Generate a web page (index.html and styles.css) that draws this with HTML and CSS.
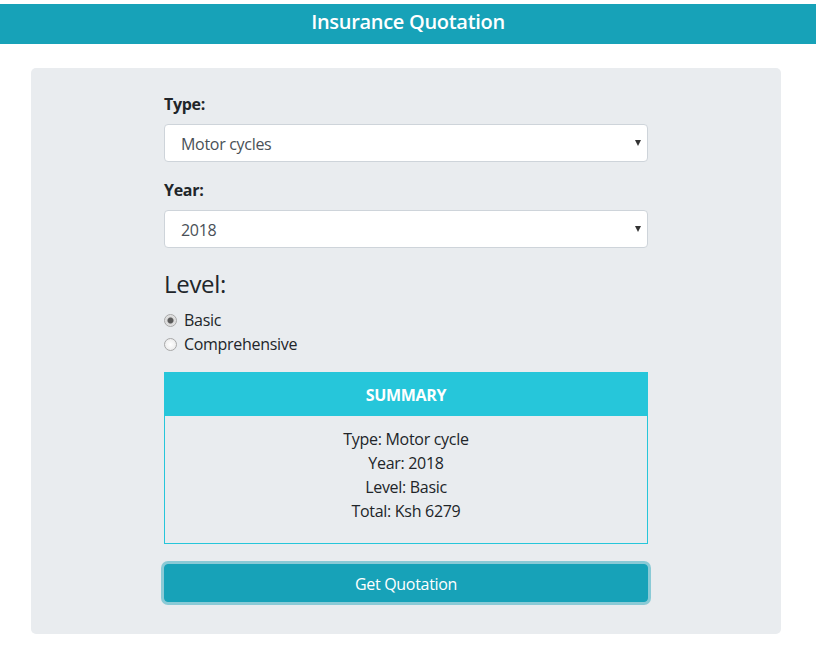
FILE: index.html
```html
<!DOCTYPE html>
<html lang="en">
<head>
<meta charset="utf-8">
<title>Insurance Quotation</title>
<link rel="stylesheet" href="styles.css">
</head>
<body>
<header class="topbar">
  <h1 class="title">Insurance Quotation</h1>
</header>
<main class="card">
  <form class="quote-form">
    <div class="group">
      <label class="label" for="type">Type:</label>
      <div class="select-wrap">
        <select id="type" class="select">
          <option>Motor cycles</option>
        </select>
      </div>
    </div>
    <div class="group">
      <label class="label" for="year">Year:</label>
      <div class="select-wrap">
        <select id="year" class="select">
          <option>2018</option>
        </select>
      </div>
    </div>
    <h4 class="level-title">Level:</h4>
    <div class="radios">
      <label class="radio-row"><input type="radio" name="level" class="radio" checked> Basic</label>
      <label class="radio-row"><input type="radio" name="level" class="radio"> Comprehensive</label>
    </div>
    <section class="summary">
      <div class="summary-head">SUMMARY</div>
      <div class="summary-body">
        <p class="line">Type: Motor cycle</p>
        <p class="line">Year: 2018</p>
        <p class="line">Level: Basic</p>
        <p class="line">Total: Ksh 6279</p>
      </div>
    </section>
    <button type="button" class="btn">Get Quotation</button>
  </form>
</main>
</body>
</html>
```

FILE: styles.css
```css
* { box-sizing: border-box; }
html, body { margin: 0; padding: 0; background: #fff; }
body {
  padding-top: 4px;
  font-family: "Open Sans", "Noto Sans", sans-serif;
  font-size: 16px;
  line-height: 24px;
  letter-spacing: -0.3px;
  color: #212529;
}
.topbar {
  height: 40px;
  background: #17a2b8;
  display: flex;
  align-items: center;
  justify-content: center;
  padding-bottom: 4px;
}
.title {
  margin: 0;
  color: #fff;
  font-size: 20px;
  font-weight: 600;
  line-height: 28px;
}
.card {
  margin: 24px 0 0 31px;
  width: 750px;
  background: #e9ecef;
  border-radius: 5px;
  padding: 24px 133px 32px;
}
.quote-form { display: flex; flex-direction: column; }
.group { margin-bottom: 16px; display: flex; flex-direction: column; }
.label { font-weight: 700; margin-bottom: 8px; }
.select-wrap { position: relative; }
.select-wrap::after {
  content: "";
  position: absolute;
  right: 7px;
  top: 16px;
  border-left: 3.5px solid transparent;
  border-right: 3.5px solid transparent;
  border-top: 6px solid #333;
}
.select {
  -webkit-appearance: none;
  appearance: none;
  width: 100%;
  height: 38px;
  border: 1px solid #ced4da;
  border-radius: 4px;
  background: #fff;
  padding: 2px 24px 0 16px;
  font-family: inherit;
  font-size: 16px;
  letter-spacing: -0.3px;
  color: #495057;
}
.level-title {
  margin: 5px 0 10px;
  font-size: 24px;
  font-weight: 400;
  line-height: 29px;
}
.radios { display: flex; flex-direction: column; margin-bottom: 16px; }
.radio-row { display: flex; align-items: center; gap: 7px; height: 24px; }
.radio {
  -webkit-appearance: none;
  appearance: none;
  margin: 0;
  width: 13px;
  height: 13px;
  border-radius: 50%;
  border: 1px solid #a8a8a8;
  background: radial-gradient(circle, #fff 0, #e6e6e6 100%);
}
.radio:checked {
  background: radial-gradient(circle, #5a5a5a 0, #5a5a5a 2.5px, #d8d8d8 3.5px, #f0f0f0 100%);
}
.summary { margin-bottom: 20px; }
.summary-head {
  background: #26c6da;
  color: #fff;
  font-weight: 700;
  text-align: center;
  padding: 11px 0 9px;
}
.summary-body {
  border: 1px solid #26c6da;
  border-top: 0;
  text-align: center;
  padding: 11px 0 20px;
}
.line { margin: 0; }
.btn {
  height: 38px;
  width: 100%;
  border: 1px solid #17a2b8;
  border-radius: 4px;
  background: #17a2b8;
  color: #fff;
  font-family: inherit;
  font-size: 16px;
  letter-spacing: -0.3px;
  padding-top: 2px;
  box-shadow: 0 0 0 3px rgba(23, 162, 184, 0.45);
}
```
